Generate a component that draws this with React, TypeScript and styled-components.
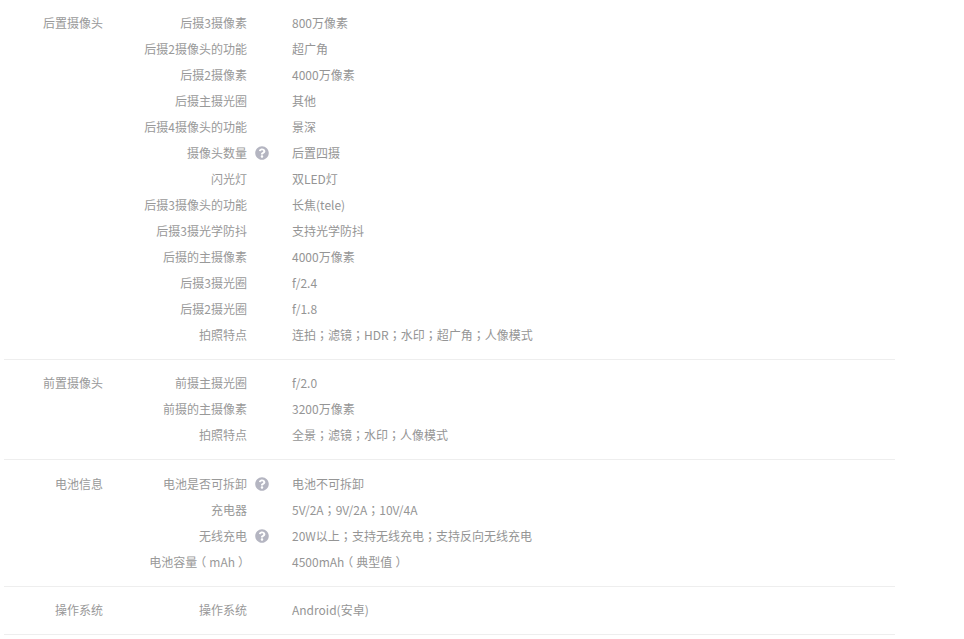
import React from 'react';
import styled, { createGlobalStyle } from 'styled-components';
import { FaQuestionCircle } from 'react-icons/fa';

const GlobalStyle = createGlobalStyle`
  html, body {
    margin: 0;
    padding: 0;
    background: #fff;
  }
`;

const Page = styled.div`
  width: 891px;
  padding-left: 4px;
  font-family: 'Noto Sans CJK SC', 'Noto Sans', sans-serif;
  font-size: 12px;
  color: #999;
`;

const Section = styled.section<{ $top: number }>`
  display: flex;
  padding: ${(p) => p.$top}px 0 11px;
  border-bottom: 1px solid #eee;
`;

const GroupName = styled.div`
  width: 99px;
  height: 26px;
  line-height: 26px;
  text-align: right;
`;

const Rows = styled.div`
  display: flex;
  flex-direction: column;
`;

const Row = styled.div`
  display: grid;
  grid-template-columns: 144px 45px 1fr;
  height: 26px;
  line-height: 26px;
`;

const Label = styled.div`
  text-align: right;
  white-space: nowrap;
`;

const HelpCell = styled.div`
  display: flex;
  align-items: center;
  padding-left: 8px;
  color: #b4b5c1;
  font-size: 14px;
`;

const Value = styled.div`
  color: #959595;
  white-space: nowrap;
`;

// the centred full-width semicolon comes from the TC cut of the font
const Semi = styled.span`
  font-family: 'Noto Sans CJK TC', sans-serif;
`;

// full-width brackets sit in the middle of their em box in the reference
const Bracket = styled.span`
  font-feature-settings: 'halt';
  padding: 0 3px;
`;

const Marked = ({ text }: { text: string }) => (
  <>
    {text.split(/([；（）])/).map((part, i) => {
      if (part === '；') return <Semi key={i}>{part}</Semi>;
      if (part === '（' || part === '）') return <Bracket key={i}>{part}</Bracket>;
      return part;
    })}
  </>
);

type Spec = { label: string; value: string; help?: boolean };

const groups: { name: string; top: number; rows: Spec[] }[] = [
  {
    name: '后置摄像头',
    top: 10,
    rows: [
      { label: '后摄3摄像素', value: '800万像素' },
      { label: '后摄2摄像头的功能', value: '超广角' },
      { label: '后摄2摄像素', value: '4000万像素' },
      { label: '后摄主摄光圈', value: '其他' },
      { label: '后摄4摄像头的功能', value: '景深' },
      { label: '摄像头数量', value: '后置四摄', help: true },
      { label: '闪光灯', value: '双LED灯' },
      { label: '后摄3摄像头的功能', value: '长焦(tele)' },
      { label: '后摄3摄光学防抖', value: '支持光学防抖' },
      { label: '后摄的主摄像素', value: '4000万像素' },
      { label: '后摄3摄光圈', value: 'f/2.4' },
      { label: '后摄2摄光圈', value: 'f/1.8' },
      { label: '拍照特点', value: '连拍；滤镜；HDR；水印；超广角；人像模式' },
    ],
  },
  {
    name: '前置摄像头',
    top: 10,
    rows: [
      { label: '前摄主摄光圈', value: 'f/2.0' },
      { label: '前摄的主摄像素', value: '3200万像素' },
      { label: '拍照特点', value: '全景；滤镜；水印；人像模式' },
    ],
  },
  {
    name: '电池信息',
    top: 11,
    rows: [
      { label: '电池是否可拆卸', value: '电池不可拆卸', help: true },
      { label: '充电器', value: '5V/2A；9V/2A；10V/4A' },
      { label: '无线充电', value: '20W以上；支持无线充电；支持反向无线充电', help: true },
      { label: '电池容量（mAh）', value: '4500mAh（典型值）' },
    ],
  },
  {
    name: '操作系统',
    top: 10,
    rows: [{ label: '操作系统', value: 'Android(安卓)' }],
  },
];

export default function App() {
  return (
    <Page>
      <GlobalStyle />
      {groups.map((group) => (
        <Section key={group.name} $top={group.top}>
          <GroupName>{group.name}</GroupName>
          <Rows>
            {group.rows.map((row) => (
              <Row key={row.label}>
                <Label>
                  <Marked text={row.label} />
                </Label>
                <HelpCell>{row.help && <FaQuestionCircle />}</HelpCell>
                <Value>
                  <Marked text={row.value} />
                </Value>
              </Row>
            ))}
          </Rows>
        </Section>
      ))}
    </Page>
  );
}
